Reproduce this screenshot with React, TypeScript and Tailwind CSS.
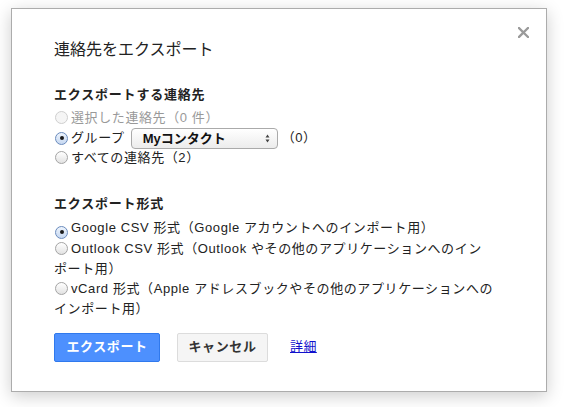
import React from 'react';

const font = { fontFamily: '"Liberation Sans", Arial, "Noto Sans CJK JP", sans-serif' };

const Radio: React.FC<{ checked?: boolean; disabled?: boolean }> = ({ checked, disabled }) => {
    if (disabled) {
        return (
            <span className="inline-block w-[13px] h-[13px] rounded-full border border-[#cfcfcf] bg-[#f5f5f5] align-[-2px] ml-[1px] mr-[3px]" />
        );
    }
    if (checked) {
        return (
            <span className="inline-flex items-center justify-center w-[13px] h-[13px] rounded-full border border-[#6a8bbd] bg-gradient-to-b from-[#eef4fc] to-[#c6d8f1] align-[-2px] ml-[1px] mr-[3px]">
                <span className="block w-[4px] h-[4px] rounded-full bg-[#1a1a1a]" />
            </span>
        );
    }
    return (
        <span className="inline-block w-[13px] h-[13px] rounded-full border border-[#a4a4a4] bg-gradient-to-b from-[#ffffff] to-[#e2e2e2] align-[-2px] ml-[1px] mr-[3px]" />
    );
};

const Line: React.FC<{ children: React.ReactNode; className?: string }> = ({ children, className }) => (
    <div className={'leading-[20px] text-[13px] tracking-[0.6px] ' + (className ?? 'text-[#222]')}>{children}</div>
);

export default function App() {
    return (
        <div className="w-[565px] h-[407px] bg-white overflow-hidden pt-[8px] pl-[11px]" style={font}>
            <div className="relative w-[536px] h-[384px] bg-white border border-[#acacac] shadow-[0_4px_16px_rgba(0,0,0,0.2)] px-[42px] pt-[31px]">
                <svg className="absolute top-[18px] right-[17px]" width="11" height="11" viewBox="0 0 11 11">
                    <path d="M1 1 L10 10 M10 1 L1 10" stroke="#9a9a9a" strokeWidth="2.3" strokeLinecap="square" />
                </svg>

                <div className="text-[16px] leading-[20px] text-[#222]">連絡先をエクスポート</div>

                <div className="mt-[25px] text-[13px] leading-[20px] font-bold tracking-[0.8px] text-[#222]">エクスポートする連絡先</div>
                <div className="mt-[3px]">
                    <Line className="text-[#999]">
                        <Radio disabled />選択した連絡先（0 件）
                    </Line>
                    <div className="flex items-center h-[20px] text-[13px] tracking-[0.6px] text-[#222]">
                        <Radio checked />
                        <span>グループ</span>
                        <div className="ml-[6px] flex items-center justify-between w-[147px] h-[21px] rounded-[4px] border border-[#aaaaaa] bg-gradient-to-b from-[#ffffff] to-[#ececec] pl-[11px] pr-[7px]">
                            <span className="font-semibold text-[#111] leading-[19px] tracking-normal">Myコンタクト</span>
                            <svg width="5" height="9" viewBox="0 0 5 9">
                                <path d="M2.5 0.5 L4.5 3.5 L0.5 3.5 Z M2.5 8.5 L4.5 5.5 L0.5 5.5 Z" fill="#444" />
                            </svg>
                        </div>
                        <span className="ml-[4px]">（0）</span>
                    </div>
                    <Line>
                        <Radio />すべての連絡先（2）
                    </Line>
                </div>

                <div className="mt-[26px] text-[13px] leading-[20px] font-bold tracking-[0.8px] text-[#222]">エクスポート形式</div>
                <div className="mt-[4px]">
                    <Line>
                        <Radio checked />Google CSV 形式（Google アカウントへのインポート用）
                    </Line>
                    <Line>
                        <Radio />Outlook CSV 形式（Outlook やその他のアプリケーションへのイン
                        <br />
                        ポート用）
                    </Line>
                    <Line>
                        <Radio />vCard 形式（Apple アドレスブックやその他のアプリケーションへの
                        <br />
                        インポート用）
                    </Line>
                </div>

                <div className="mt-[14px] flex items-center">
                    <button className="w-[106px] h-[29px] rounded-[2px] border border-[#3079ed] bg-[#4d90fe] text-white text-[13px] font-bold tracking-[0.6px]">
                        エクスポート
                    </button>
                    <button className="ml-[17px] w-[91px] h-[29px] rounded-[2px] border border-[#dcdcdc] bg-[#f5f5f5] text-[#333] text-[13px] font-bold tracking-[0.6px]">
                        キャンセル
                    </button>
                    <a href="#" className="ml-[22px] text-[13px] text-[#1111cc] underline tracking-[0.4px]">
                        詳細
                    </a>
                </div>
            </div>
        </div>
    );
}
